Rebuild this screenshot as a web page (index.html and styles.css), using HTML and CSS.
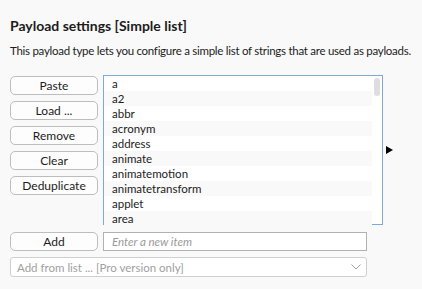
FILE: index.html
```html
<!DOCTYPE html>
<html lang="en">
<head>
  <meta charset="UTF-8" />
  <title>Payload settings</title>
  <link rel="stylesheet" href="styles.css">
</head>
<body>
  <h1>Payload settings [Simple list]</h1>
  <p class="desc">This payload type lets you configure a simple list of strings that are used as payloads.</p>

  <div class="editor">
    <div class="actions">
      <button>Paste</button>
      <button>Load ...</button>
      <button>Remove</button>
      <button>Clear</button>
      <button>Deduplicate</button>
    </div>
    <div class="list">
      <ul class="items">
        <li>a</li>
        <li>a2</li>
        <li>abbr</li>
        <li>acronym</li>
        <li>address</li>
        <li>animate</li>
        <li>animatemotion</li>
        <li>animatetransform</li>
        <li>applet</li>
        <li>area</li>
      </ul>
      <div class="scrollbar"><div class="thumb"></div></div>
    </div>
    <div class="arrow"></div>
  </div>

  <div class="add-row">
    <button>Add</button>
    <input type="text" placeholder="Enter a new item" />
  </div>
  <div class="add-list">
    <span>Add from list ... [Pro version only]</span>
    <svg width="10" height="6" viewBox="0 0 10 6"><path d="M0.5 0.5 L5 5 L9.5 0.5" fill="none" stroke="#a0a0a0" stroke-width="1"/></svg>
  </div>
</body>
</html>
```

FILE: styles.css
```css
body {
  margin: 0;
  padding: 17px 10px 0 10px;
  background: #f9f9f9;
  color: #1c1c1c;
  font-family: Lato, sans-serif;
}
h1 {
  font-size: 14px;
  font-weight: bold;
  margin: 0;
  line-height: 18px;
}
.desc {
  font-size: 11.5px;
  letter-spacing: -0.27px;
  margin: 8px 0 0 0;
  line-height: 15px;
  white-space: nowrap;
}
.editor {
  display: flex;
  margin-top: 17px;
}
.actions {
  display: flex;
  flex-direction: column;
  gap: 6px;
  width: 88px;
  padding-top: 1px;
}
button {
  height: 19px;
  padding: 0;
  background: #fdfdfd;
  border: 1px solid #bdbdbd;
  border-radius: 5px;
  font-family: Lato, sans-serif;
  font-size: 12px;
  color: #1c1c1c;
  line-height: 17px;
}
.list {
  display: flex;
  width: 278px;
  height: 148px;
  margin-left: 5px;
  background: white;
  border: 1px solid #7eaadb;
}
.items {
  list-style: none;
  margin: 0;
  padding: 0;
  flex: 1;
}
.items li {
  height: 15px;
  line-height: 15px;
  padding-left: 8px;
  font-size: 11.5px;
}
.items li:nth-child(even) {
  background: #f9f9f9;
}
.scrollbar {
  width: 10px;
  padding-top: 2px;
}
.thumb {
  width: 6px;
  height: 18px;
  margin-left: 2px;
  background: #dedede;
  border-radius: 3px;
}
.arrow {
  align-self: center;
  margin-left: 3px;
  width: 0;
  height: 0;
  border-top: 4px solid transparent;
  border-bottom: 4px solid transparent;
  border-left: 7px solid #000;
}
.add-row {
  display: flex;
  gap: 5px;
  margin-top: 7px;
}
.add-row button {
  width: 88px;
  height: 19px;
}
.add-row input {
  width: 264px;
  height: 19px;
  box-sizing: border-box;
  margin: 0;
  padding: 0 8px;
  border: 1px solid #b3b0b0;
  background: white;
  font-family: Lato, sans-serif;
  font-size: 11.5px;
}
.add-row input::placeholder {
  font-style: italic;
  color: #9a9a9a;
}
.add-list {
  display: flex;
  align-items: center;
  justify-content: space-between;
  width: 357px;
  height: 20px;
  box-sizing: border-box;
  margin-top: 6px;
  padding: 0 5px 0 6px;
  background: white;
  border: 1px solid #cfcfcf;
  border-radius: 3px;
  font-size: 11.5px;
  color: #a0a0a0;
}
```
